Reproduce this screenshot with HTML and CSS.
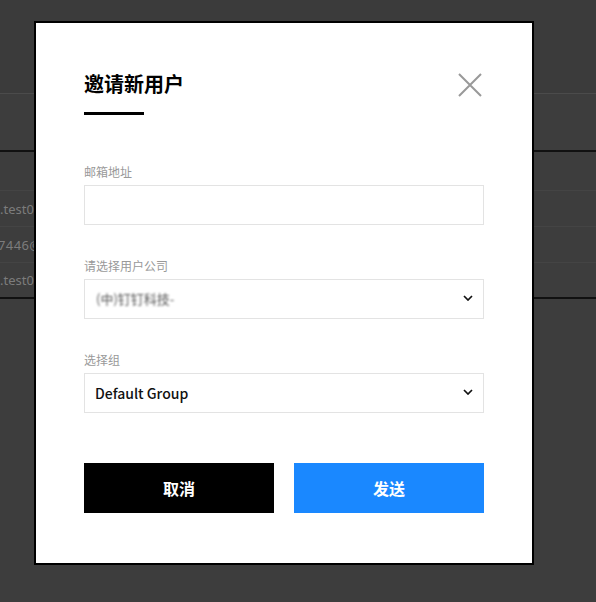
FILE: index.html
```html
<!DOCTYPE html>
<html lang="zh-CN">
<head>
<meta charset="utf-8">
<title>邀请新用户</title>
<link rel="stylesheet" href="styles.css">
</head>
<body>
<div class="page">
  <div class="topbar"></div>
  <div class="toolbar"></div>
  <div class="thead"></div>
  <div class="row"><span class="cell">.test001@example.com</span></div>
  <div class="row"><span class="cell shift">7446@qq.com</span></div>
  <div class="row last"><span class="cell">.test002@example.com</span></div>
</div>

<div class="modal">
  <div class="modal-head">
    <div class="title-wrap">
      <h2 class="title">邀请新用户</h2>
      <div class="title-bar"></div>
    </div>
    <button class="close" type="button" aria-label="关闭">
      <svg width="24" height="24" viewBox="0 0 24 24"><path d="M1 1L23 23M23 1L1 23" stroke="#999" stroke-width="2" fill="none"/></svg>
    </button>
  </div>

  <div class="field first">
    <label class="label">邮箱地址</label>
    <div class="input"></div>
  </div>

  <div class="field">
    <label class="label">请选择用户公司</label>
    <div class="input select">
      <span class="blurred">(中)钉钉科技-</span>
      <svg class="chev" width="10" height="6" viewBox="0 0 10 6"><path d="M1 1L5 5L9 1" stroke="#111" stroke-width="1.7" fill="none"/></svg>
    </div>
  </div>

  <div class="field">
    <label class="label">选择组</label>
    <div class="input select">
      <span class="value">Default Group</span>
      <svg class="chev" width="10" height="6" viewBox="0 0 10 6"><path d="M1 1L5 5L9 1" stroke="#111" stroke-width="1.7" fill="none"/></svg>
    </div>
  </div>

  <div class="actions">
    <button class="btn cancel" type="button">取消</button>
    <button class="btn send" type="button">发送</button>
  </div>
</div>
</body>
</html>
```

FILE: styles.css
```css
html, body {
  margin: 0;
  padding: 0;
}
body {
  width: 596px;
  height: 602px;
  background: #3d3d3d;
  font-family: "Noto Sans CJK SC", "Noto Sans", sans-serif;
  overflow: hidden;
  position: relative;
}
.page {
  width: 596px;
}
.topbar {
  height: 93px;
  border-bottom: 1px solid #4b4b4b;
  background: #3b3b3b;
}
.toolbar {
  height: 56px;
  border-bottom: 2px solid #111;
}
.thead {
  height: 38px;
  border-bottom: 1px solid #444;
}
.row {
  height: 35px;
  border-bottom: 1px solid #444;
  display: flex;
  align-items: center;
}
.row.last {
  border-bottom: 2px solid #111;
  height: 34px;
}
.cell {
  font-family: "Noto Sans", sans-serif;
  font-size: 13px;
  color: #7c7c7c;
  white-space: nowrap;
}
.cell.shift {
  margin-left: -2px;
  letter-spacing: 0.4px;
}

.modal {
  position: absolute;
  left: 34px;
  top: 21px;
  width: 400px;
  padding: 46px 48px 50px;
  background: #fff;
  border: 2px solid #000;
}
.modal-head {
  display: flex;
  justify-content: space-between;
  align-items: flex-start;
}
.title {
  margin: 0;
  font-size: 20px;
  line-height: 30px;
  font-weight: 700;
  color: #000;
}
.title-bar {
  margin-top: 13px;
  width: 60px;
  height: 3px;
  background: #000;
}
.close {
  margin: 4px 2px 0 0;
  padding: 0;
  border: 0;
  background: none;
  width: 24px;
  height: 24px;
  display: block;
}
.close svg {
  display: block;
}
.field {
  margin-top: 32px;
}
.field.first {
  margin-top: 48px;
}
.label {
  display: block;
  font-size: 12px;
  line-height: 18px;
  color: #999;
  margin-bottom: 4px;
}
.input {
  height: 38px;
  border: 1px solid #e3e3e3;
  box-sizing: content-box;
}
.select {
  display: flex;
  align-items: center;
  justify-content: space-between;
  padding: 0 10px 0 10px;
}
.value {
  font-size: 14px;
  font-weight: 500;
  color: #111;
}
.blurred {
  font-size: 13px;
  line-height: 16px;
  color: #555;
  filter: blur(1px);
  margin-left: 1px;
}
.chev {
  display: block;
  margin-top: -3px;
  margin-right: 0;
}
.actions {
  margin-top: 50px;
  display: flex;
  gap: 20px;
}
.btn {
  flex: 1;
  height: 50px;
  border: 0;
  font-family: "Noto Sans CJK SC", sans-serif;
  font-size: 16px;
  font-weight: 700;
  color: #fff;
  padding: 0;
}
.cancel {
  background: #000;
}
.send {
  background: #1a88ff;
}
```
